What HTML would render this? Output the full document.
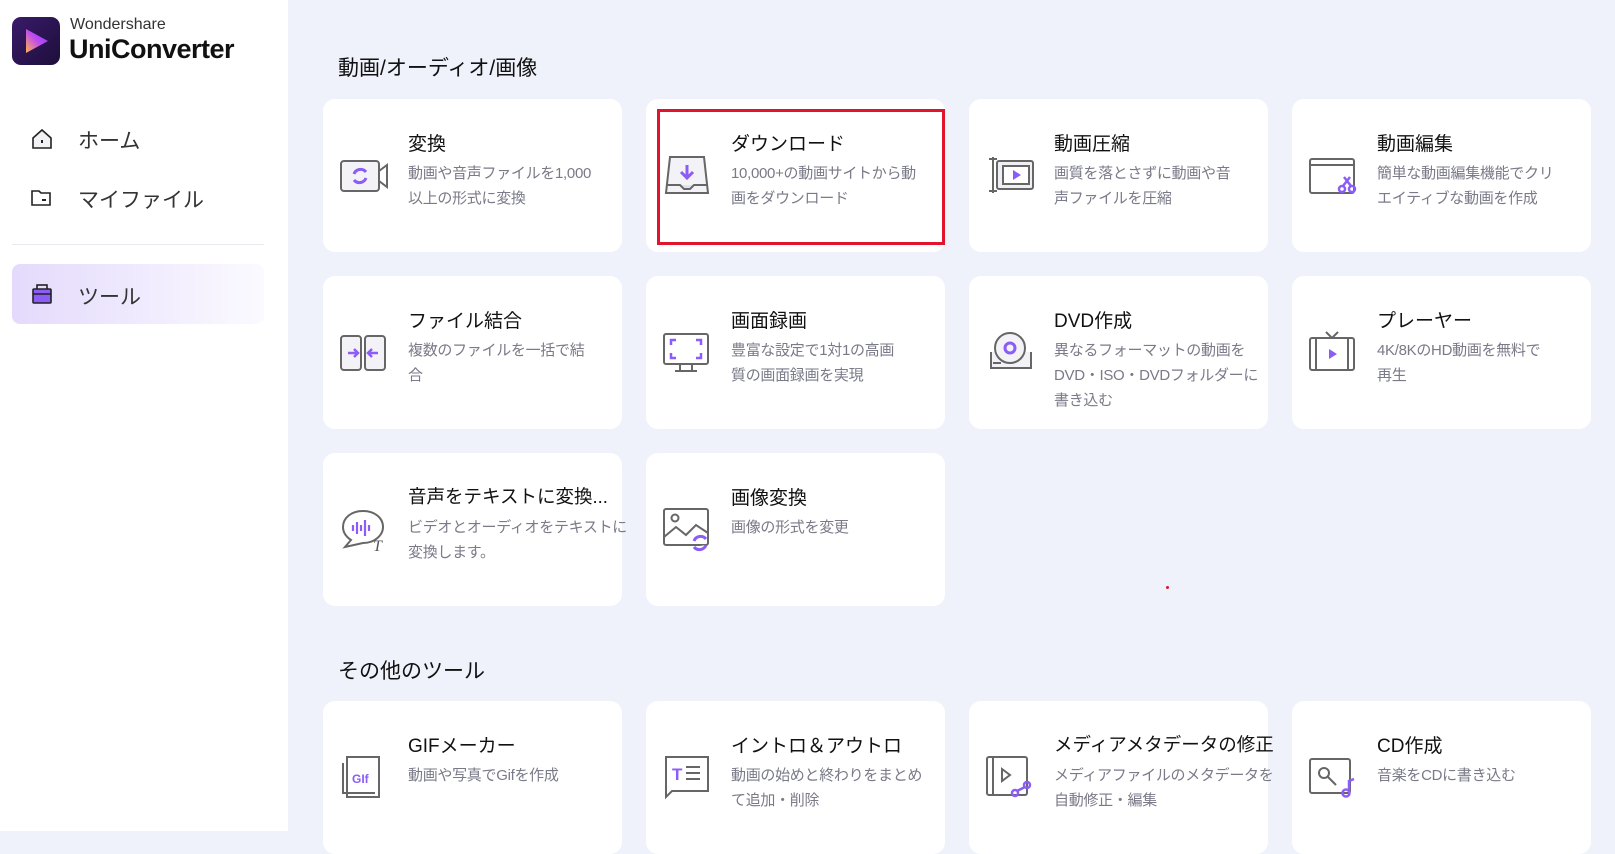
<!DOCTYPE html>
<html><head><meta charset="utf-8"><style>
*{margin:0;padding:0;box-sizing:border-box}
body{width:1615px;height:831px;overflow:hidden;background:#eff2fa;font-family:"Liberation Sans","Noto Sans CJK JP",sans-serif;position:relative}
.side{position:absolute;left:0;top:0;width:288px;height:831px;background:#fff}
.logo{position:absolute;left:12px;top:17px;width:48px;height:48px;border-radius:9px;background:linear-gradient(135deg,#3a1a6a,#1d0f3a)}
.brand1{position:absolute;left:70px;top:16px;font-size:16px;color:#333}
.brand2{position:absolute;left:69px;top:34px;font-size:27px;font-weight:bold;color:#111;letter-spacing:-0.5px}
.nav{position:absolute;left:0;font-size:21px;color:#333}
.nav svg{position:absolute;left:30px}
.nav span{position:absolute;left:78px;white-space:nowrap}
.hr{position:absolute;left:12px;top:244px;width:252px;height:1px;background:#e8eaf0}
.act{position:absolute;left:12px;top:264px;width:252px;height:60px;border-radius:8px;background:linear-gradient(90deg,#e4dafc,#fbfaff)}
h2{position:absolute;font-size:21px;font-weight:normal;color:#111}
.card{position:absolute;width:299px;height:153px;background:#fff;border-radius:12px}
.card svg{position:absolute;left:16px;top:52px}
.t{position:absolute;left:85px;top:30px;font-size:19px;color:#111;white-space:nowrap}
.d{position:absolute;left:85px;top:62px;font-size:15px;line-height:25px;color:#7a7a88;white-space:nowrap;letter-spacing:-0.3px}
</style></head><body>
<div class="side">
<div class="logo"><svg width="48" height="48"><path d="M14 12 L36 24 L14 36 Z" fill="url(#g)"/><defs><linearGradient id="g" x1="0" y1="1" x2="1" y2="0"><stop offset="0" stop-color="#ffb347"/><stop offset=".5" stop-color="#c04cf0"/><stop offset="1" stop-color="#7b3cf5"/></linearGradient></defs></svg></div>
<div class="brand1">Wondershare</div>
<div class="brand2">UniConverter</div>
<div class="nav" style="top:125px"><svg width="24" height="24" style="top:2px"><path d="M3 11 L12 3 L21 11 V21 H3 Z" fill="#f2f2f5" stroke="#222" stroke-width="1.6"/><rect x="11" y="13" width="2" height="3" fill="#222"/></svg><span>ホーム</span></div>
<div class="nav" style="top:184px"><svg width="24" height="24" style="top:2px"><path d="M2 5 H9 L11 7 H20 V19 H2 Z" fill="#fff" stroke="#222" stroke-width="1.6"/><rect x="12" y="13" width="4" height="2" fill="#222"/></svg><span>マイファイル</span></div>
<div class="hr"></div>
<div class="act"></div>
<div class="nav" style="top:281px"><svg width="24" height="24" style="top:1px"><rect x="7" y="3" width="10" height="5" fill="none" stroke="#222" stroke-width="1.6"/><rect x="3" y="7" width="18" height="14" rx="1" fill="#8b5cf6" stroke="#222" stroke-width="1.6"/><line x1="3" y1="12" x2="21" y2="12" stroke="#222" stroke-width="1.4"/></svg><span>ツール</span></div>
</div>

<h2 style="left:338px;top:52px">動画/オーディオ/画像</h2>
<h2 style="left:338px;top:655px">その他のツール</h2>

<div class="card" style="left:323px;top:99px"><svg width="52" height="48"><rect x="2" y="10" width="38" height="30" rx="3" fill="#f3f3f7" stroke="#666" stroke-width="2"/><path d="M40 20 L48 14 V36 L40 30" fill="none" stroke="#666" stroke-width="2"/><path d="M15 23 a7 7 0 0 1 12 -2 M27 27 a7 7 0 0 1 -12 2" stroke="#8b5cf6" stroke-width="3" fill="none"/></svg><div class="t">変換</div><div class="d">動画や音声ファイルを1,000<br>以上の形式に変換</div></div>
<div class="card" style="left:646px;top:99px"><svg width="52" height="48"><path d="M8 6 H42 L46 42 H4 Z" fill="#f3f3f7" stroke="#666" stroke-width="2"/><path d="M25 14 V26 M19 21 L25 27 L31 21" stroke="#8b5cf6" stroke-width="3" fill="none"/><path d="M4 34 H18 L22 38 H28 L32 34 H46" stroke="#666" stroke-width="2" fill="#dfe3ec"/></svg><div class="t">ダウンロード</div><div class="d">10,000+の動画サイトから動<br>画をダウンロード</div></div>
<div class="card" style="left:969px;top:99px"><svg width="52" height="48"><path d="M8 6 V42 M4 40 H12 M4 8 H12" stroke="#666" stroke-width="2"/><rect x="12" y="10" width="36" height="28" rx="2" fill="#eef0f5" stroke="#666" stroke-width="2"/><rect x="18" y="15" width="26" height="18" fill="#fff" stroke="#666" stroke-width="2"/><path d="M28 19 L36 24 L28 29Z" fill="#8b5cf6"/></svg><div class="t">動画圧縮</div><div class="d">画質を落とさずに動画や音<br>声ファイルを圧縮</div></div>
<div class="card" style="left:1292px;top:99px"><svg width="52" height="48"><rect x="2" y="8" width="44" height="34" rx="2" fill="none" stroke="#666" stroke-width="2"/><line x1="2" y1="14" x2="46" y2="14" stroke="#666" stroke-width="2"/><circle cx="34" cy="38" r="3" fill="none" stroke="#8b5cf6" stroke-width="2.5"/><circle cx="44" cy="38" r="3" fill="none" stroke="#8b5cf6" stroke-width="2.5"/><path d="M35 35 L42 26 M43 35 L36 26" stroke="#8b5cf6" stroke-width="2.5"/></svg><div class="t">動画編集</div><div class="d">簡単な動画編集機能でクリ<br>エイティブな動画を作成</div></div>

<div class="card" style="left:323px;top:276px"><svg width="52" height="48"><rect x="2" y="8" width="20" height="34" rx="3" fill="#f3f3f7" stroke="#666" stroke-width="2"/><rect x="26" y="8" width="20" height="34" rx="3" fill="#f3f3f7" stroke="#666" stroke-width="2"/><path d="M9 25 H19 M15 21 L19 25 L15 29 M39 25 H29 M33 21 L29 25 L33 29" stroke="#8b5cf6" stroke-width="2.5" fill="none"/></svg><div class="t">ファイル結合</div><div class="d">複数のファイルを一括で結<br>合</div></div>
<div class="card" style="left:646px;top:276px"><svg width="52" height="48"><rect x="2" y="6" width="44" height="30" rx="2" fill="#fff" stroke="#666" stroke-width="2"/><path d="M18 42 V36 M30 42 V36 M13 43 H35" stroke="#666" stroke-width="2"/><path d="M9 17 V12 H14 M34 12 H39 V17 M39 25 V30 H34 M14 30 H9 V25" stroke="#8b5cf6" stroke-width="2.5" fill="none"/></svg><div class="t">画面録画</div><div class="d">豊富な設定で1対1の高画<br>質の画面録画を実現</div></div>
<div class="card" style="left:969px;top:276px"><svg width="52" height="48"><path d="M6 24 V40 H46 V24" fill="#f3f3f7" stroke="#666" stroke-width="2"/><circle cx="25" cy="20" r="15" fill="#f3f3f7" stroke="#666" stroke-width="2"/><circle cx="25" cy="20" r="5" fill="none" stroke="#8b5cf6" stroke-width="3"/><path d="M8 35 H16" stroke="#666" stroke-width="2"/></svg><div class="t">DVD作成</div><div class="d">異なるフォーマットの動画を<br>DVD・ISO・DVDフォルダーに<br>書き込む</div></div>
<div class="card" style="left:1292px;top:276px"><svg width="52" height="48"><path d="M18 4 L24 10 L30 4" stroke="#666" stroke-width="2" fill="none"/><rect x="2" y="10" width="44" height="32" rx="2" fill="#fff" stroke="#666" stroke-width="2"/><path d="M8 10 V42 M40 10 V42" stroke="#666" stroke-width="2"/><path d="M21 21 L29 26 L21 31Z" fill="#8b5cf6"/></svg><div class="t">プレーヤー</div><div class="d">4K/8KのHD動画を無料で<br>再生</div></div>

<div class="card" style="left:323px;top:453px"><svg width="52" height="48"><path d="M24 6 C12 6 4 13 4 22 C4 29 9 33 12 35 L6 42 L24 38 C36 38 44 30 44 22 C44 13 36 6 24 6Z" fill="#fff" stroke="#666" stroke-width="2"/><path d="M14 20 V26 M18 17 V29 M22 20 V26 M26 15 V31 M30 20 V26" stroke="#8b5cf6" stroke-width="2.2"/><text x="34" y="46" font-size="16" font-style="italic" font-family="Liberation Serif,serif" fill="#555">T</text></svg><div class="t" style="font-size:18.5px">音声をテキストに変換...</div><div class="d">ビデオとオーディオをテキストに<br>変換します。</div></div>
<div class="card" style="left:646px;top:453px"><svg width="52" height="48"><rect x="2" y="4" width="44" height="36" rx="2" fill="#fff" stroke="#666" stroke-width="2"/><circle cx="13" cy="13" r="3.5" fill="none" stroke="#666" stroke-width="2"/><path d="M2 32 L14 22 L24 30 L34 20 L46 28" fill="none" stroke="#666" stroke-width="2"/><path d="M32 36 a7 7 0 0 1 12 -2 M44 40 a7 7 0 0 1 -12 2" stroke="#8b5cf6" stroke-width="3" fill="#fff"/></svg><div class="t">画像変換</div><div class="d">画像の形式を変更</div></div>

<div class="card" style="left:323px;top:701px"><svg width="52" height="48"><path d="M8 4 H40 V44 H8 Z" fill="#fff" stroke="#666" stroke-width="2"/><path d="M4 10 V40 H36" fill="none" stroke="#666" stroke-width="2"/><text x="13" y="30" font-size="12" font-weight="bold" fill="#8b5cf6">GIf</text></svg><div class="t">GIFメーカー</div><div class="d">動画や写真でGifを作成</div></div>
<div class="card" style="left:646px;top:701px"><svg width="52" height="48"><path d="M4 4 H46 V38 H10 L4 44 Z" fill="#fff" stroke="#666" stroke-width="2"/><text x="10" y="27" font-size="17" font-weight="bold" fill="#8b5cf6">T</text><path d="M24 14 H38 M24 20 H38 M24 26 H38" stroke="#666" stroke-width="2"/></svg><div class="t">イントロ＆アウトロ</div><div class="d">動画の始めと終わりをまとめ<br>て追加・削除</div></div>
<div class="card" style="left:969px;top:701px"><svg width="52" height="48"><rect x="2" y="4" width="40" height="38" rx="2" fill="#fff" stroke="#666" stroke-width="2"/><path d="M8 4 V42" stroke="#666" stroke-width="2"/><path d="M17 16 L25 22 L17 28Z" fill="none" stroke="#666" stroke-width="2"/><circle cx="30" cy="40" r="3" fill="none" stroke="#8b5cf6" stroke-width="2.5"/><circle cx="42" cy="32" r="3" fill="none" stroke="#8b5cf6" stroke-width="2.5"/><path d="M32 38 L40 34" stroke="#8b5cf6" stroke-width="2.5"/></svg><div class="t" style="font-size:18.5px">メディアメタデータの修正</div><div class="d">メディアファイルのメタデータを<br>自動修正・編集</div></div>
<div class="card" style="left:1292px;top:701px"><svg width="52" height="48"><rect x="2" y="6" width="40" height="34" rx="2" fill="#fff" stroke="#666" stroke-width="2"/><circle cx="16" cy="20" r="5" fill="none" stroke="#666" stroke-width="2"/><path d="M20 24 L28 32" stroke="#666" stroke-width="2"/><circle cx="38" cy="40" r="3.5" fill="none" stroke="#8b5cf6" stroke-width="2.5"/><path d="M41 39 V28 L46 26" stroke="#8b5cf6" stroke-width="2.5" fill="none"/></svg><div class="t">CD作成</div><div class="d">音楽をCDに書き込む</div></div>

<div style="position:absolute;left:657px;top:109px;width:288px;height:136px;border:3px solid #e0142c"></div>
<div style="position:absolute;left:1166px;top:586px;width:3px;height:3px;background:#e0142c;border-radius:50%"></div>
</body></html>
